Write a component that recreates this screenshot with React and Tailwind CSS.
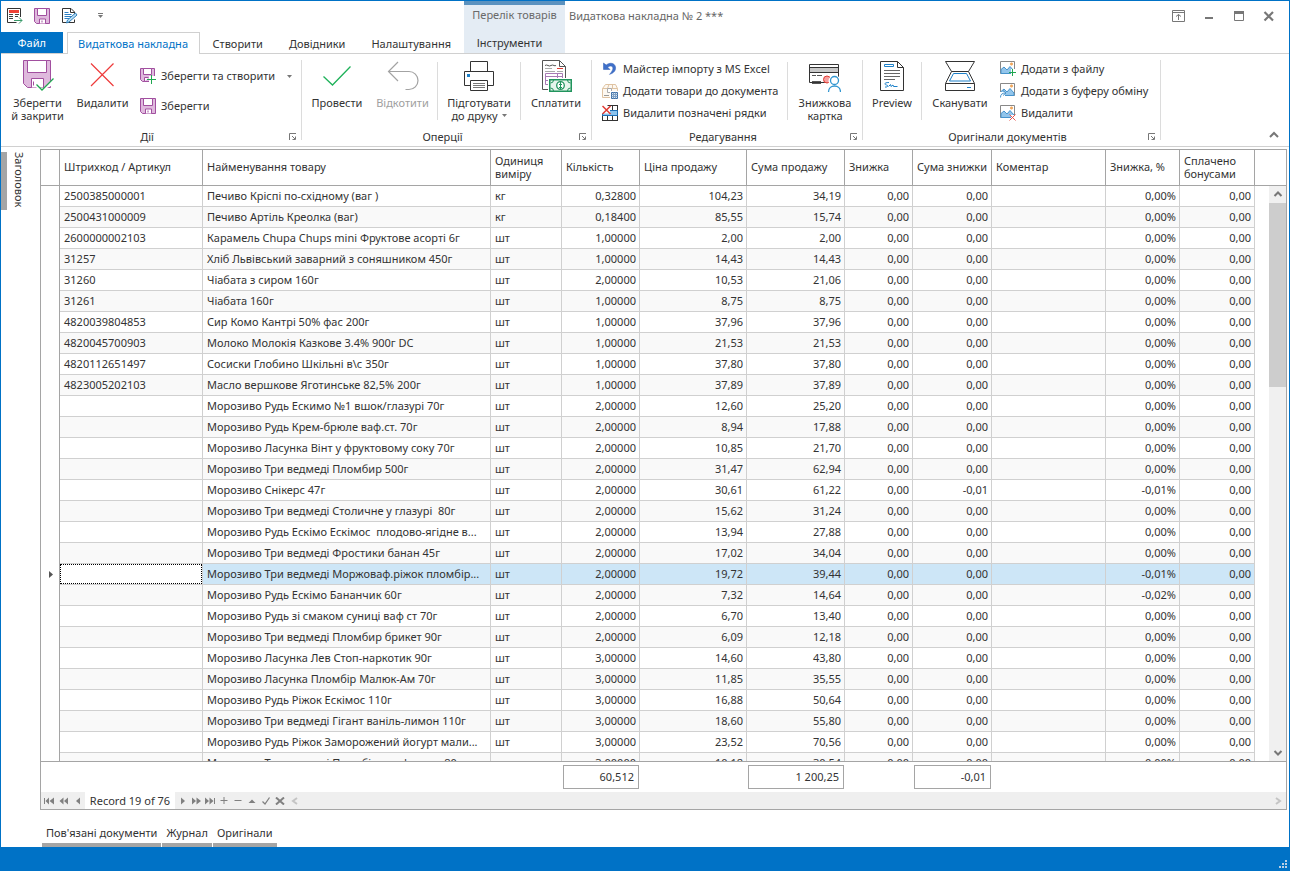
import React, { useState } from "react";
import clsx from "clsx";

const columns = [
  { key: "code", title: "Штрихкод / Артикул", width: "w-[143px]" },
  { key: "name", title: "Найменування товару", width: "w-[288px]" },
  { key: "unit", title: "Одиниця виміру", width: "w-[71px]" },
  { key: "qty", title: "Кількість", width: "w-[78px]", number: true },
  { key: "price", title: "Ціна продажу", width: "w-[107px]", number: true },
  { key: "sum", title: "Сума продажу", width: "w-[98px]", number: true },
  { key: "discount", title: "Знижка", width: "w-[68px]", number: true },
  { key: "discountSum", title: "Сума знижки", width: "w-[79px]", number: true },
  { key: "comment", title: "Коментар", width: "w-[114px]" },
  { key: "percent", title: "Знижка, %", width: "w-[74px]", number: true },
  { key: "bonus", title: "Сплачено бонусами", width: "w-[75px]", number: true },
];

// code, name, unit, qty, price, sum, discountSum, percent
const items = [
  ["2500385000001", "Печиво Кріспі по-східному (ваг )", "кг", "0,32800", "104,23", "34,19"],
  ["2500431000009", "Печиво Артіль Креолка (ваг)", "кг", "0,18400", "85,55", "15,74"],
  ["2600000002103", "Карамель Chupa Chups mini Фруктове асорті 6г", "шт", "1,00000", "2,00", "2,00"],
  ["31257", "Хліб Львівський заварний з соняшником 450г", "шт", "1,00000", "14,43", "14,43"],
  ["31260", "Чіабата з сиром 160г", "шт", "2,00000", "10,53", "21,06"],
  ["31261", "Чіабата 160г", "шт", "1,00000", "8,75", "8,75"],
  ["4820039804853", "Сир Комо Кантрі 50% фас 200г", "шт", "1,00000", "37,96", "37,96"],
  ["4820045700903", "Молоко Молокія Казкове 3.4% 900г DC", "шт", "1,00000", "21,53", "21,53"],
  ["4820112651497", "Сосиски Глобино Шкільні в\\с 350г", "шт", "1,00000", "37,80", "37,80"],
  ["4823005202103", "Масло вершкове Яготинське 82,5% 200г", "шт", "1,00000", "37,89", "37,89"],
  ["", "Морозиво Рудь Ескимо №1 вшок/глазурі 70г", "шт", "2,00000", "12,60", "25,20"],
  ["", "Морозиво Рудь Крем-брюле ваф.ст. 70г", "шт", "2,00000", "8,94", "17,88"],
  ["", "Морозиво Ласунка Вінт у фруктовому соку 70г", "шт", "2,00000", "10,85", "21,70"],
  ["", "Морозиво Три ведмеді Пломбир 500г", "шт", "2,00000", "31,47", "62,94"],
  ["", "Морозиво Снікерс 47г", "шт", "2,00000", "30,61", "61,22", "-0,01", "-0,01%"],
  ["", "Морозиво Три ведмеді Столичне у глазурі  80г", "шт", "2,00000", "15,62", "31,24"],
  ["", "Морозиво Рудь Ескімо Ескімос  плодово-ягідне в...", "шт", "2,00000", "13,94", "27,88"],
  ["", "Морозиво Три ведмеді Фростики банан 45г", "шт", "2,00000", "17,02", "34,04"],
  ["", "Морозиво Три ведмеді Моржоваф.ріжок пломбір...", "шт", "2,00000", "19,72", "39,44", "0,00", "-0,01%"],
  ["", "Морозиво Рудь Ескімо Бананчик 60г", "шт", "2,00000", "7,32", "14,64", "0,00", "-0,02%"],
  ["", "Морозиво Рудь зі смаком суниці ваф ст 70г", "шт", "2,00000", "6,70", "13,40"],
  ["", "Морозиво Три ведмеді Пломбир брикет 90г", "шт", "2,00000", "6,09", "12,18"],
  ["", "Морозиво Ласунка Лев Стоп-наркотик 90г", "шт", "3,00000", "14,60", "43,80"],
  ["", "Морозиво Ласунка Пломбір Малюк-Ам 70г", "шт", "3,00000", "11,85", "35,55"],
  ["", "Морозиво Рудь Ріжок Ескімос 110г", "шт", "3,00000", "16,88", "50,64"],
  ["", "Морозиво Три ведмеді Гігант ваніль-лимон 110г", "шт", "3,00000", "18,60", "55,80"],
  ["", "Морозиво Рудь Ріжок Заморожений йогурт мали...", "шт", "3,00000", "23,52", "70,56"],
  ["", "Морозиво Три ведмеді Пломбір у вафлях ст 80г", "шт", "3,00000", "10,18", "30,54"],
].map(([code, name, unit, qty, price, sum, discountSum = "0,00", percent = "0,00%"]) => ({
  code,
  name,
  unit,
  qty,
  price,
  sum,
  discount: "0,00",
  discountSum,
  comment: "",
  percent,
  bonus: "0,00",
}));

/* ---------- icons ---------- */

function Icon({ size = 16, children }) {
  return (
    <svg
      width={size}
      height={size}
      viewBox={`0 0 ${size} ${size}`}
      fill="none"
      className="shrink-0"
      aria-hidden="true"
    >
      {children}
    </svg>
  );
}

const SaveIcon = () => (
  <Icon>
    <path d="M.5 .5h15v15h-13l-2-2z" fill="#dfb9dd" stroke="#a14f9f" />
    <path d="M3.5 .5h9v7h-9z" fill="#fff" stroke="#a14f9f" />
    <path d="M5.500 15.500v-4.500h6v4.500" fill="#fff" stroke="#a14f9f" />
    <path d="M8 12.500v2" stroke="#a14f9f" />
  </Icon>
);

const SaveNewIcon = () => (
  <Icon>
    <path d="M.5 .5h14v13h-12l-2-2z" fill="#dfb9dd" stroke="#a14f9f" />
    <path d="M3.500 .5h8v6h-8z" fill="#fff" stroke="#a14f9f" />
    <path d="M4.500 13.500v-4h4" fill="#fff" stroke="#a14f9f" />
    <path d="M9 8h7v8h-7z" fill="#fff" />
    <path d="M11.500 7v9M7 11.500h9" stroke="#1fa750" />
  </Icon>
);

const SaveCloseIcon = () => (
  <Icon size={32}>
    <path d="M1.500 .5h27v27h-23l-4-4z" fill="#dfb9dd" stroke="#a14f9f" />
    <path d="M5.500 .5h19v12h-19z" fill="#fff" stroke="#a14f9f" />
    <path d="M9.500 27.500v-9h12v9" fill="#fff" stroke="#a14f9f" />
    <path d="M11.500 21.500v4" stroke="#a14f9f" />
    <path d="M14.500 25l5 5L31 18.500l1 6-8 4-4.500 3.500-5-4z" fill="#fff" />
    <path d="M14.500 24.500l5.500 5.500L31.500 18.500" stroke="#1fa750" strokeWidth="1.300" />
  </Icon>
);

const CrossIcon = () => (
  <Icon size={32}>
    <path d="M4 3.500l22.500 22.500M26.500 3.500L4 26" stroke="#ee3b3b" strokeWidth="1.200" />
  </Icon>
);

const CheckIcon = () => (
  <Icon size={32}>
    <path d="M2.500 16.500l9 8.500L29.500 6.500" stroke="#1fb25a" strokeWidth="1.300" />
  </Icon>
);

const UndoIcon = () => (
  <Icon size={32}>
    <path d="M11 2l-9.500 9.500 9.500 9.500M1.500 11.500h20.500a8.700 8.700 0 0 1 0 18h-3.500" stroke="#a3a3a3" strokeWidth="1.200" />
  </Icon>
);

const PrinterIcon = () => (
  <Icon size={32}>
    <path d="M7.500 11.500v-10h17v10" stroke="#333" />
    <path d="M7.500 25.500h-6v-14h29v14h-6" stroke="#333" />
    <path d="M7.500 20.500h17v10h-17z" fill="#fff" stroke="#333" />
    <path d="M10 23.500h12M10 25.500h12M10 27.500h12" stroke="#777" />
    <path d="M4 14h3v3h-3z" fill="#1c80c9" />
  </Icon>
);

const PayIcon = () => (
  <Icon size={32}>
    <path d="M2.500 .5h17l6 6v23h-23z" fill="#fff" stroke="#555" />
    <path d="M19.500 .5v6h6" stroke="#555" />
    <path d="M5 5.500q1.500-1 3 0t3 0 3 0 2-.5" stroke="#555" />
    <path d="M17 8.500h6" stroke="#e03a32" />
    <path d="M5 8.500h7M5 11.500h10M17 11.500h6" stroke="#aaa" />
    <path d="M5.500 13.500h17v11h-17z" fill="#fff" stroke="#a87bb5" />
    <path d="M5.500 16.500h17M17.500 13.500v11M5.500 20.500h17" stroke="#a87bb5" />
    <path d="M8 18h24v14h-24z" fill="#fff" />
    <path d="M9.750 19.750h21.500v11.500h-21.500z" fill="#e6f5ec" stroke="#21945d" strokeWidth="1.500" />
    <circle cx="20.500" cy="25.500" r="3.800" fill="#fff" stroke="#21945d" strokeWidth="1.300" />
    <path d="M20.500 22v7M19 24.500h3M19 27.500h3" stroke="#21945d" />
    <path d="M10.500 23q3 0 3-3M10.500 28q3 0 3 3M30.500 23q-3 0-3-3M30.500 28q-3 0-3 3" stroke="#21945d" />
  </Icon>
);

const ExcelUndoIcon = () => (
  <Icon>
    <path d="M1.500 2v6.500h6.500l-2.300-2.300c3-2.400 6-.8 5 2.200-.5 1.800-1.800 3.500-3.200 5C12 12 14 9.500 13.500 6 12.800 2 8 1 4.200 4z" fill="#3f70c9" stroke="#2e5cb5" strokeWidth=".5" />
  </Icon>
);

const BoxIcon = () => (
  <Icon>
    <path d="M.5 5.500l3-4h10l2 4v9h-15z" fill="#fdf8f1" stroke="#dfc3a2" />
    <path d="M.5 5.500h15M5.500 5.500l1.500-4M10.500 5.500v-4" stroke="#dfc3a2" />
    <path d="M5.500 5.500h4v4h-4z" fill="#fff" stroke="#aaa" />
    <path d="M2 12.500h5" stroke="#999" />
    <path d="M8 8h8v8h-8z" fill="#fff" />
    <path d="M9.500 9.500h6v6h-6z" fill="#d9e6f2" stroke="#3c6ea5" />
    <path d="M9.500 11.500h6M9.500 13.500h6M11.500 9.500v6M13.500 9.500v6" stroke="#7d9fc3" />
  </Icon>
);

const DeleteRowsIcon = () => (
  <Icon>
    <path d="M.5 10v6M5.500 10v6M10.500 0v16M15.500 0v16M0 15.500h16M5.500 .5h10" stroke="#333" />
    <path d="M.5 5.500h15v5h-15z" fill="#8cc4ee" stroke="#1c6fb5" />
    <path d="M0 1h8v7.500h-8z" fill="#fff" />
    <path d="M.5 1l8 8M8.500 1l-8 8" stroke="#e03a32" strokeWidth="1.500" />
  </Icon>
);

const CardIcon = () => (
  <Icon size={32}>
    <path d="M.5 4.500h29v18h-29z" fill="#fff" stroke="#333" />
    <path d="M1 8h28v4h-28z" fill="#c8c8c8" />
    <path d="M.5 7.500h29M.5 12.500h29" stroke="#333" />
    <path d="M3 15.500h4M8 15.500h5M3 21.500h9M3 23.500h9" stroke="#555" />
    <circle cx="18" cy="19.500" r="3.500" fill="#f6a0a0" stroke="#e03a32" />
    <circle cx="25.500" cy="21" r="6" fill="#fff" />
    <circle cx="25.500" cy="20.500" r="4" fill="#fff" stroke="#2f95d0" strokeWidth="1.300" />
    <path d="M19.500 32c0-8 12-8 12 0" fill="#fff" stroke="#2f95d0" strokeWidth="1.300" />
  </Icon>
);

const PreviewIcon = () => (
  <Icon size={32}>
    <path d="M4.500 1.500h17l6 6v23h-23z" fill="#fff" stroke="#333" />
    <path d="M21.500 1.500v6h6" stroke="#333" />
    <path d="M8.500 4.500h9v2h-9z" stroke="#1c80c9" />
    <path d="M8 10.500h16M8 13.500h16M8 16.500h16M8 19.500h11" stroke="#666" />
    <path d="M13 22.500c-5 0-5 2-2.500 2.500 2.500.5 1 2.500-1.500 2M12.500 26.500l2-2 .5 2 2-1.500.5 1.500h4" stroke="#1c80c9" />
  </Icon>
);

const ScannerIcon = () => (
  <Icon size={32}>
    <path d="M7.500 11.500L1.500 1.500h29l-6 10zM7.500 11.500L1.500 23.500M24.500 11.500l6 12" stroke="#333" />
    <path d="M9.500 13.500h13l4 7.500h-21z" stroke="#1c80c9" />
    <path d="M1.500 23.500h29v7h-29z" fill="#fff" stroke="#333" />
    <path d="M23 27.500h4" stroke="#1c80c9" />
  </Icon>
);

function PictureIcon({ children }) {
  return (
    <Icon>
      <path d="M.5 .5h14v12h-14z" fill="#fff" stroke="#888" />
      <path d="M1 8.500l3-2.500 3 3 3-3.500 4 4.500v2.500H1z" fill="#92c5eb" stroke="#4793cc" />
      <circle cx="11.500" cy="3" r="1.200" fill="#f2ac62" stroke="#ea9440" strokeWidth=".5" />
      {children}
    </Icon>
  );
}

const PictureAddIcon = () => (
  <PictureIcon>
    <path d="M11 8h5v7h-5z" fill="#fff" />
    <path d="M12.500 8v7M9 11.500h7" stroke="#1fa750" />
  </PictureIcon>
);

const PictureClipIcon = () => (
  <PictureIcon>
    <path d="M0 9h5v7H0z" fill="#fff" />
    <path d="M.5 14.500c0-3 1.500-4.500 5-4.500M3 7.500l3 2.500-3 2.500" stroke="#4793cc" />
  </PictureIcon>
);

const PictureDeleteIcon = () => (
  <PictureIcon>
    <path d="M11 10h5v6h-5z" fill="#fff" />
    <path d="M9.500 9.500l6 6M15.500 9.500l-6 6" stroke="#e8544e" />
  </PictureIcon>
);

const FormIcon = () => (
  <Icon>
    <path d="M13.500 9V.5H.5v14h9" fill="#fff" stroke="#333" />
    <path d="M2 2h10v3h-10z" fill="#ee4136" />
    <path d="M2 6.500h4M8 6.500h4M2 8.500h4M8 8.500h3M2 10.500h4" stroke="#444" />
    <path d="M7 12.500h8M12 9.500l3 3-3 3" stroke="#3a9b6b" />
  </Icon>
);

const EditIcon = () => (
  <Icon>
    <path d="M12.500 7V4L9 .5H.5v14h12v-3" fill="#fff" stroke="#333" />
    <path d="M8.500 .5v4h4" stroke="#333" />
    <path d="M2.500 4.500h4M2.500 6.500h7M2.500 8.500h7M2.500 10.500h5" stroke="#2b7fc4" />
    <path d="M4.500 15l1-3 8-7 1.500 2-8 7z" fill="#b9dcf4" stroke="#2f82bd" />
  </Icon>
);

const Caret = () => (
  <svg width="5" height="3" viewBox="0 0 5 3" aria-hidden="true">
    <path d="M0 0h5L2.500 3z" fill="#777" />
  </svg>
);

const Chevron = ({ d, color = "#777" }) => (
  <svg width="10" height="10" viewBox="0 0 10 10" fill="none" aria-hidden="true">
    <path d={d} stroke={color} strokeWidth="2" />
  </svg>
);

/* ---------- ribbon ---------- */

function BigButton({ icon, lines, width, caret, disabled }) {
  return (
    <button
      disabled={disabled}
      className={clsx("flex flex-col items-center pt-0.5", width, disabled && "text-[#a0a0a0]")}
    >
      {icon}
      <span className="mt-1 leading-[13px] text-center whitespace-nowrap">
        {lines.map((line, i) => (
          <span key={line} className="flex items-center justify-center gap-1">
            {line}
            {caret && i === lines.length - 1 && <Caret />}
          </span>
        ))}
      </span>
    </button>
  );
}

function SmallButton({ icon, label, tall }) {
  return (
    <button className={clsx("flex items-center gap-[5px] whitespace-nowrap", tall ? "h-[30px]" : "h-[22px]")}>
      {icon}
      {label}
    </button>
  );
}

const Separator = () => <div className="mt-1 h-[58px] w-px shrink-0 bg-[#dcdcdc]" />;

function Group({ title, width, children }) {
  return (
    <>
      <section className={clsx("flex shrink-0 flex-col", width)}>
        <div className="flex h-[71px]">{children}</div>
        <div className="flex h-4 items-center pl-1 pr-[3px]">
          <h2 className="flex-1 text-center leading-4">{title}</h2>
          <button aria-label={`${title}: параметри`}>
            <svg width="9" height="8" viewBox="0 0 9 8" fill="none" aria-hidden="true">
              <path d="M.5 7V.5H7M3 3l3 3M6.500 3.500v3h-3" stroke="#777" />
            </svg>
          </button>
        </div>
      </section>
      <div className="mt-0.5 h-20 w-px shrink-0 bg-[#dcdcdc]" />
    </>
  );
}

function Ribbon() {
  return (
    <div className="flex h-[93px] shrink-0 border-b border-[#d0d0d0] pt-1">
      <Group title="Дії" width="w-[300px]">
        <div className="flex pl-1">
          <BigButton icon={<SaveCloseIcon />} lines={["Зберегти", "й закрити"]} width="w-[65px]" />
          <BigButton icon={<CrossIcon />} lines={["Видалити"]} width="w-[65px]" />
        </div>
        <div className="flex flex-1 flex-col pl-[5px] pr-[9px] pt-[3px]">
          <div className="flex items-center justify-between">
            <SmallButton icon={<SaveNewIcon />} label="Зберегти та створити" tall />
            <button aria-label="Більше варіантів збереження">
              <Caret />
            </button>
          </div>
          <SmallButton icon={<SaveIcon />} label="Зберегти" tall />
        </div>
      </Group>
      <Group title="Оперції" width="w-[289px]">
        <div className="flex px-0.5">
          <BigButton icon={<CheckIcon />} lines={["Провести"]} width="w-[66px]" />
          <BigButton icon={<UndoIcon />} lines={["Відкотити"]} width="w-[65px]" disabled />
        </div>
        <Separator />
        <BigButton icon={<PrinterIcon />} lines={["Підготувати", "до друку"]} width="w-[82px]" caret />
        <Separator />
        <BigButton icon={<PayIcon />} lines={["Сплатити"]} width="w-[70px]" />
      </Group>
      <Group title="Редагування" width="w-[270px]">
        <div className="flex w-[195px] flex-col pl-2.5">
          <SmallButton icon={<ExcelUndoIcon />} label="Майстер імпорту з MS Excel" />
          <SmallButton icon={<BoxIcon />} label="Додати товари до документа" />
          <SmallButton icon={<DeleteRowsIcon />} label="Видалити позначені рядки" />
        </div>
        <Separator />
        <BigButton icon={<CardIcon />} lines={["Знижкова", "картка"]} width="w-[74px]" />
      </Group>
      <Group title="Оригінали документів" width="w-[297px]">
        <BigButton icon={<PreviewIcon />} lines={["Preview"]} width="w-[58px]" />
        <Separator />
        <BigButton icon={<ScannerIcon />} lines={["Сканувати"]} width="w-[76px]" />
        <div className="flex flex-col pl-0.5">
          <SmallButton icon={<PictureAddIcon />} label="Додати з файлу" />
          <SmallButton icon={<PictureClipIcon />} label="Додати з буферу обміну" />
          <SmallButton icon={<PictureDeleteIcon />} label="Видалити" />
        </div>
      </Group>
      <div className="flex flex-1 items-end justify-end pb-1.5 pr-2.5">
        <button aria-label="Згорнути стрічку">
          <Chevron d="M1 7l4-4 4 4" />
        </button>
      </div>
    </div>
  );
}

function Header() {
  const tabs = ["Створити", "Довідники", "Налаштування"];

  return (
    <header className="flex h-[53px] shrink-0 border-b border-[#d0d0d0]">
      <div className="flex w-[463px] shrink-0 flex-col">
        <div className="flex h-[31px] items-center pb-0.5 pl-1.5">
          <button className="mr-[11px]" aria-label="Форма"><FormIcon /></button>
          <button className="mr-3" aria-label="Зберегти"><SaveIcon /></button>
          <button className="mr-5" aria-label="Редагувати"><EditIcon /></button>
          <button className="flex flex-col items-center gap-px" aria-label="Налаштувати панель">
            <span className="h-px w-[5px] bg-[#777]" />
            <Caret />
          </button>
        </div>
        <nav className="-mb-px flex h-[22px]">
          <button className="mb-px w-[62px] bg-[#0072c6] text-white">Файл</button>
          <button className="ml-1 w-[134px] border border-b-0 border-[#d0d0d0] bg-white pt-px text-[#0072c6]">
            Видаткова накладна
          </button>
          {tabs.map((tab) => (
            <button key={tab} className="px-[13px] pt-0.5 whitespace-nowrap">{tab}</button>
          ))}
        </nav>
      </div>
      <div className="flex w-[101px] shrink-0 flex-col items-center border-t-4 border-[#5b92bf] bg-[#e4ecf4]">
        <span className="h-[27px] whitespace-nowrap leading-5 text-[#6a6a6a]">Перелік товарів</span>
        <button className="h-[21px] pr-2.5 pt-px">Інструменти</button>
      </div>
      <div className="flex h-[29px] flex-1 items-center pl-1 pr-3.5">
        <h1 className="flex-1 text-[#666]">Видаткова накладна № 2 ***</h1>
        <div className="flex items-center gap-[17px]">
          <button aria-label="Параметри відображення стрічки">
            <svg width="13" height="12" viewBox="0 0 13 12" fill="none" aria-hidden="true">
              <path d="M.5 .5h12v11h-12zM.5 2.500h12M6.500 10V4.500M4 6.500l2.500-2 2.500 2" stroke="#777" />
            </svg>
          </button>
          <button aria-label="Згорнути">
            <svg width="13" height="12" viewBox="0 0 13 12" aria-hidden="true">
              <path d="M3 7h8v2h-8z" fill="#777" />
            </svg>
          </button>
          <button aria-label="Розгорнути">
            <svg width="13" height="12" viewBox="0 0 13 12" fill="none" aria-hidden="true">
              <path d="M2.500 1.500h9v9h-9z" stroke="#777" />
              <path d="M2 1h10v3h-10z" fill="#777" />
            </svg>
          </button>
          <button aria-label="Закрити">
            <svg width="13" height="12" viewBox="0 0 13 12" fill="none" aria-hidden="true">
              <path d="M2.500 2l8.500 8.500M11 2l-8.500 8.500" stroke="#777" strokeWidth="2.200" />
            </svg>
          </button>
        </div>
      </div>
    </header>
  );
}

/* ---------- grid ---------- */

function ItemsTable({ current, onSelect }) {
  return (
    <div className="relative min-h-0 flex-1 overflow-hidden">
      <table className="w-full table-fixed border-separate border-spacing-0">
        <thead>
          <tr className="h-9">
            <th className="w-[19px] border-b border-r border-[#a5a5a5]" aria-label="Поточний рядок" />
            {columns.map((col) => (
              <th
                key={col.key}
                scope="col"
                className={clsx(
                  "border-b border-r border-[#a5a5a5] p-0 pb-0.5 pl-1 text-left font-normal leading-[13px]",
                  col.width
                )}
              >
                {col.title}
              </th>
            ))}
            <th className="border-b border-[#a5a5a5]" aria-label="Прокрутка" />
          </tr>
        </thead>
        <tbody>
          {items.map((item, index) => (
            <tr
              key={index}
              onClick={() => onSelect(index)}
              className={clsx("h-[21px]", index % 2 === 1 && "bg-[#f9f9f9]", index === current && "bg-[#cde6f7]")}
            >
              <td className="border-r border-[#a5a5a5] bg-white p-0 pl-0.5">
                {index === current && (
                  <svg width="4" height="7" viewBox="0 0 4 7" className="mx-auto" aria-hidden="true">
                    <path d="M0 0l4 3.500L0 7z" fill="#555" />
                  </svg>
                )}
              </td>
              {columns.map((col) => (
                <td
                  key={col.key}
                  className={clsx(
                    "whitespace-pre border-b border-r border-[#d0d0d0] leading-5",
                    col.number ? "p-0 pr-[3px] text-right" : "p-0 pl-1",
                    index === current && col.key === "code" && "bg-white"
                  )}
                >
                  {index === current && col.key === "code" ? (
                    <div className="-ml-1 h-5 border border-dotted border-black pl-[3px] leading-[18px]">{item.code}</div>
                  ) : (
                    item[col.key]
                  )}
                </td>
              ))}
              <td className="bg-white p-0" />
            </tr>
          ))}
        </tbody>
      </table>
      <div className="absolute bottom-0 right-0 top-9 flex w-[17px] flex-col bg-[#f0f0f0]">
        <button className="flex h-[17px] items-center justify-center" aria-label="Вгору">
          <Chevron d="M1.500 6L5 2.500 8.500 6" />
        </button>
        <div className="h-[184px] bg-[#cdcdcd]" />
        <button className="mt-auto flex h-[17px] items-center justify-center" aria-label="Вниз">
          <Chevron d="M1.500 3L5 6.500 8.500 3" />
        </button>
      </div>
    </div>
  );
}

function Totals() {
  return (
    <div className="grid h-[31px] shrink-0 grid-cols-[522px_76px_109px_96px_70px_77px_1fr] border-t border-[#a5a5a5] pb-[3px] pt-[3px] text-right leading-[22px]">
      <output className="col-start-2 border border-[#a5a5a5] pr-1">60,512</output>
      <output className="col-start-4 border border-[#a5a5a5] pr-1">1 200,25</output>
      <output className="col-start-6 border border-[#a5a5a5] pr-1">-0,01</output>
    </div>
  );
}

function NavButton({ label, d, stroke, onClick, width = "w-3.5" }) {
  return (
    <button aria-label={label} onClick={onClick} className={clsx("flex h-full items-center justify-center", width)}>
      <svg width="10" height="8" viewBox="0 0 10 8" fill="none" aria-hidden="true">
        {stroke ? <path d={d} stroke="#808080" strokeWidth={stroke} /> : <path d={d} fill="#808080" />}
      </svg>
    </button>
  );
}

function Navigator({ current, setCurrent }) {
  const last = items.length - 1;

  return (
    <div className="flex h-[17px] shrink-0 items-center bg-[#efefef]">
      <NavButton width="w-[15px]" label="Перший" onClick={() => setCurrent(0)} d="M0 1h1v6h-1zM5 .5v7L1.500 4zM10 .5v7L5.500 4z" />
      <NavButton width="w-[15px]" label="Попередня сторінка" d="M4.500 .5v7L.5 4zM9 .5v7L5 4z" />
      <NavButton label="Попередній" onClick={() => setCurrent(Math.max(0, current - 1))} d="M7 .5v7L3 4z" />
      <span className="w-[90px] bg-white text-center leading-[17px]">Record {current + 1} of 76</span>
      <NavButton label="Наступний" onClick={() => setCurrent(Math.min(last, current + 1))} d="M4 .5v7l4-3.500z" />
      <NavButton label="Наступна сторінка" d="M1 .5v7l4-3.500zM5.500 .5v7L10 4z" />
      <NavButton label="Останній" onClick={() => setCurrent(last)} d="M0 .5v7l4-3.500zM4.500 .5v7L8.500 4zM9 1h1v6h-1z" />
      <NavButton label="Додати" d="M1.500 3.500h7M5 0v7" stroke="1" />
      <NavButton label="Вилучити" d="M1.500 3.500h7" stroke="1" />
      <NavButton label="Змінити" d="M1.500 6L5 2.500 8.500 6z" />
      <NavButton label="Прийняти" d="M1.500 4.500L4 7 8.500 .5" stroke="1.300" />
      <NavButton label="Скасувати" d="M1 .5l8 7M9 .5l-8 7" stroke="2" />
      <button className="ml-[3px]" aria-label="Ліворуч">
        <Chevron d="M7 2L3 5l4 3" color="#c4c4c4" />
      </button>
      <button className="ml-auto mr-[3px]" aria-label="Праворуч">
        <Chevron d="M3 2l4 3-4 3" color="#c4c4c4" />
      </button>
    </div>
  );
}

function App() {
  const [current, setCurrent] = useState(18);

  return (
    <div className="flex h-screen flex-col overflow-hidden bg-white font-['Noto_Sans','Open_Sans',sans-serif] text-[11px] leading-4 text-[#333]">
      <div className="flex min-h-0 flex-1 flex-col border-x border-t border-[#0072c6]">
        <Header />
        <Ribbon />
        <div className="flex min-h-0 flex-1 pt-0.5">
          <aside className="w-[39px] shrink-0 pt-[3px]">
            <button className="flex h-[58px] items-center border-l-6 border-[#a5a5a5] pl-1 [writing-mode:vertical-rl]">
              Заголовок
            </button>
          </aside>
          <main className="flex min-w-0 flex-1 flex-col pr-0.5">
            <div className="flex min-h-0 flex-1 flex-col border border-[#a5a5a5]">
              <ItemsTable current={current} onSelect={setCurrent} />
              <Totals />
              <Navigator current={current} setCurrent={setCurrent} />
            </div>
            <nav className="flex h-[37px] shrink-0 items-end gap-px pl-0.5">
              {["Пов'язані документи", "Журнал", "Оригінали"].map((tab) => (
                <button key={tab} className="h-[23px] border-b-4 border-[#a5a5a5] px-1 pb-0.5">
                  {tab}
                </button>
              ))}
            </nav>
          </main>
        </div>
      </div>
      <footer className="flex h-6 shrink-0 items-end justify-end bg-[#0072c6] p-[3px]">
        <svg width="8" height="8" viewBox="0 0 8 8" aria-hidden="true">
          <path d="M6 0h2v2h-2zM3 3h2v2h-2zM6 3h2v2h-2zM0 6h2v2h-2zM3 6h2v2h-2zM6 6h2v2h-2z" fill="#b9cfe4" />
        </svg>
      </footer>
    </div>
  );
}

export default App;
